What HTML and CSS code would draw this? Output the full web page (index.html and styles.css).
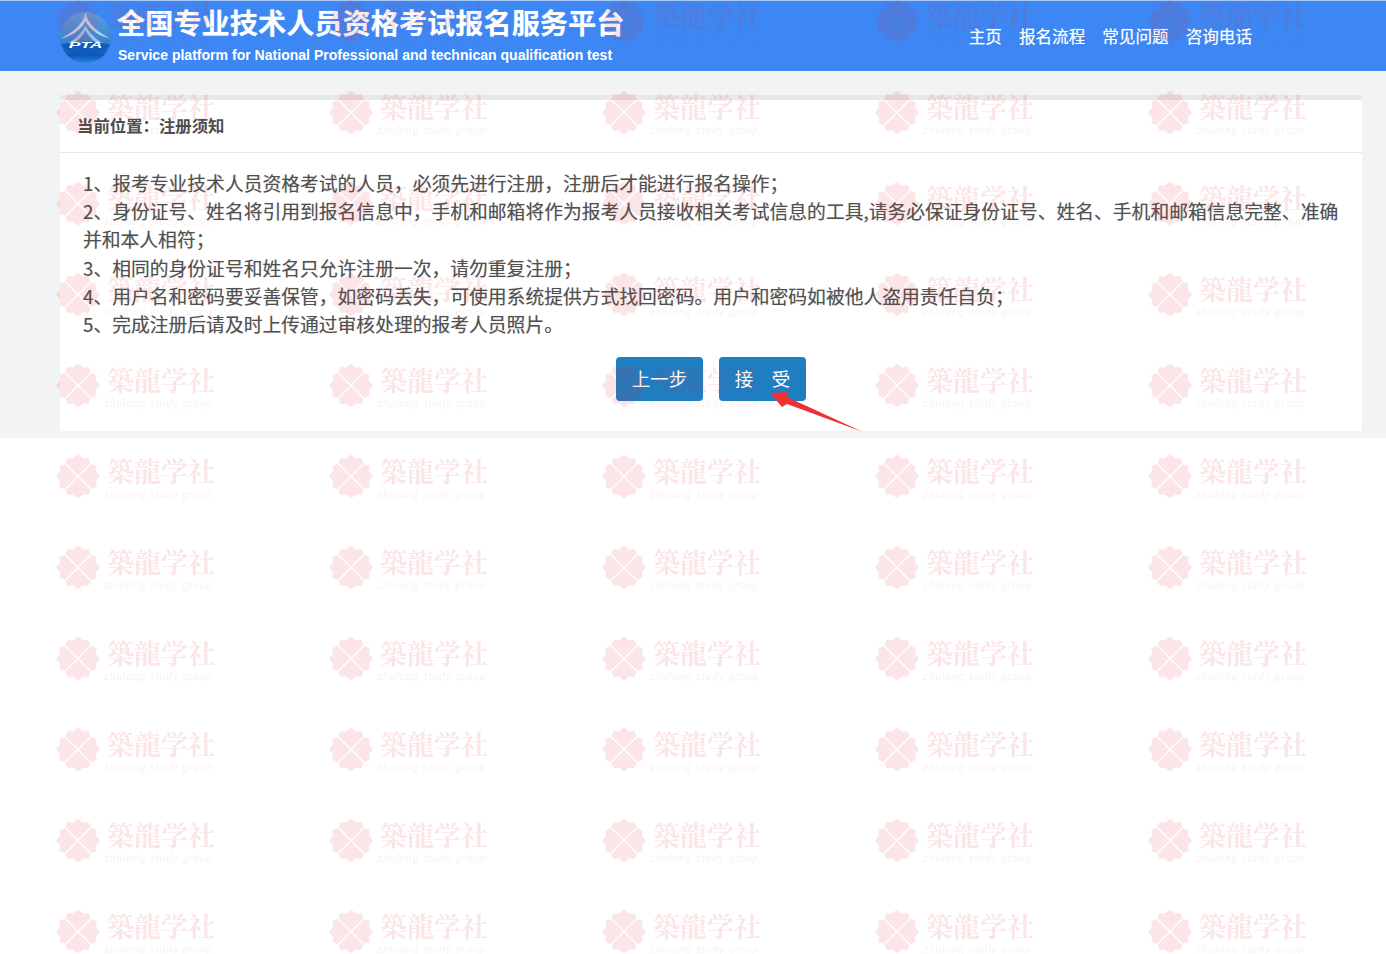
FILE: index.html
```html
<!DOCTYPE html>
<html lang="zh-CN">
<head>
<meta charset="utf-8">
<title>全国专业技术人员资格考试报名服务平台</title>
<link rel="stylesheet" href="styles.css">
</head>
<body>
<header class="top">
  <div class="brand">
    <svg class="logo" viewBox="0 0 50 50" aria-hidden="true">
      <defs>
        <linearGradient id="globe" x1="0" y1="0" x2="0" y2="1">
          <stop offset="0" stop-color="#5f9fdd"/>
          <stop offset=".55" stop-color="#3b86d2"/>
          <stop offset=".85" stop-color="#0c56b8"/>
          <stop offset="1" stop-color="#2b86dc"/>
        </linearGradient>
      </defs>
      <circle cx="25" cy="25" r="25" fill="url(#globe)"/>
      <path d="M25 1C23 11 13 20 1 26C13 23 21 17 25 9C29 17 37 23 49 26C37 20 27 11 25 1Z" fill="#b9d5f0"/>
      <path d="M25 13C22 20 15 27 7 31H13C19 27 23 23 25 18C27 23 31 27 37 31H43C35 27 28 20 25 13Z" fill="#9cc3e8"/>
      <path d="M1 32Q25 26 49 32Q46 38 25 43Q6 39 1 32Z" fill="#0f5cbd"/>
      <text x="25" y="35" class="logo-text" textLength="33" lengthAdjust="spacingAndGlyphs">PTA</text>
    </svg>
    <div class="brand-text">
      <h1 class="brand-title">全国专业技术人员资格考试报名服务平台</h1>
      <p class="brand-sub">Service platform for National Professional and technican qualification test</p>
    </div>
  </div>
  <nav class="nav">
    <a class="nav-link">主页</a>
    <a class="nav-link">报名流程</a>
    <a class="nav-link">常见问题</a>
    <a class="nav-link">咨询电话</a>
  </nav>
</header>
<section class="band">
  <div class="panel">
    <div class="crumb">当前位置：注册须知</div>
    <div class="notice">
      <p>1、报考专业技术人员资格考试的人员，必须先进行注册，注册后才能进行报名操作；</p>
      <p>2、身份证号、姓名将引用到报名信息中，手机和邮箱将作为报考人员接收相关考试信息的工具,请务必保证身份证号、姓名、手机和邮箱信息完整、准确并和本人相符；</p>
      <p>3、相同的身份证号和姓名只允许注册一次，请勿重复注册；</p>
      <p>4、用户名和密码要妥善保管，如密码丢失，可使用系统提供方式找回密码。用户和密码如被他人盗用责任自负；</p>
      <p>5、完成注册后请及时上传通过审核处理的报考人员照片。</p>
    </div>
    <div class="actions">
      <button class="btn">上一步</button>
      <button class="btn">接&emsp;受</button>
    </div>
  </div>
</section>
<svg class="watermark" aria-hidden="true">
  <defs>
    <path id="petal" d="M22 23.500L9.500 11L11.500 6L17 6.500L22 2.500L27 6.500L32.500 6L34.500 11Z"/>
    <pattern id="wm" patternUnits="userSpaceOnUse" x="56" y="-3" width="273" height="91">
      <g class="wm-flower">
        <use href="#petal"/>
        <use href="#petal" transform="rotate(90 22 24.500)"/>
        <use href="#petal" transform="rotate(180 22 24.500)"/>
        <use href="#petal" transform="rotate(270 22 24.500)"/>
      </g>
      <text x="51" y="30" class="wm-title">築龍学社</text>
      <text x="48" y="46" class="wm-sub">zhulong study group</text>
    </pattern>
  </defs>
  <rect width="100%" height="100%" fill="url(#wm)"/>
</svg>
<svg class="pointer" viewBox="0 0 100 50" aria-hidden="true">
  <path d="M2 4L20 3L19 8L95 43L19 15L14 18Z"/>
</svg>
</body>
</html>
```
FILE: styles.css
```css
* { box-sizing: border-box; }
html, body { margin: 0; height: 100%; }
body {
  position: relative;
  min-height: 954px;
  overflow: hidden;
  background: #fff;
  color: #505050;
  font-family: "Noto Sans CJK SC", "Liberation Sans", sans-serif;
}
.top {
  height: 71px;
  display: flex;
  justify-content: space-between;
  background: #3c87f4;
  border-top: 1px solid #a9c8f6;
  padding: 0 134px 0 60px;
  color: #fff;
}
.brand { display: flex; gap: 6px; }
.logo { width: 51px; height: 51px; margin-top: 11px; flex: none; }
.logo-text {
  font: italic 700 8px "Liberation Sans", sans-serif;
  fill: #fff;
  text-anchor: middle;
}
.brand-title {
  margin: 1px 0 0;
  font-size: 28.2px;
  line-height: 40px;
  font-weight: 700;
  white-space: nowrap;
  text-shadow: 0 0 1px rgba(255, 255, 255, .5);
}
.brand-sub {
  margin: 3px 0 0 1px;
  font: 700 14.05px/20px "Liberation Sans", sans-serif;
  white-space: nowrap;
}
.nav { display: flex; gap: 17px; padding-top: 23px; }
.nav-link {
  font-size: 16.6px;
  line-height: 24px;
  text-shadow: 0 0 1px rgba(255, 255, 255, .5);
}
.band {
  height: 367px;
  padding: 24px 24px 6px 60px;
  background: #f2f3f4;
}
.panel {
  height: 336px;
  background: #fff;
  border-top: 5px solid #e7e8e8;
}
.crumb {
  height: 53px;
  padding-left: 17px;
  border-bottom: 1px solid #e6e6e6;
  font-size: 16.4px;
  line-height: 50px;
  font-weight: 700;
  color: #4d4d4d;
}
.notice {
  padding: 16px 23px 0;
  font-size: 18.8px;
  line-height: 28.2px;
  text-shadow: 0 0 1px rgba(74, 74, 74, .35);
}
.notice p { margin: 0; }
.actions {
  display: flex;
  justify-content: center;
  gap: 16px;
  margin-top: 19px;
}
.btn {
  width: 87px;
  height: 44px;
  padding: 0 0 2px;
  border: 0;
  border-radius: 4px;
  background: #1f7ec2;
  color: #fff;
  font-family: inherit;
  font-size: 18.5px;
}
.watermark {
  position: absolute;
  inset: 0;
  width: 100%;
  height: 100%;
  pointer-events: none;
  opacity: .115;
}
.wm-flower { fill: #e62633; }
.wm-title {
  font: 700 27px "Noto Serif CJK SC", "Noto Sans CJK SC", serif;
  fill: #e62633;
}
.wm-sub {
  font: italic 400 10px "Liberation Sans", sans-serif;
  fill: #e62633;
  opacity: .6;
  letter-spacing: 1px;
}
.pointer {
  position: absolute;
  left: 768px;
  top: 389px;
  width: 100px;
  height: 50px;
  pointer-events: none;
  fill: #ee3233;
}
```
